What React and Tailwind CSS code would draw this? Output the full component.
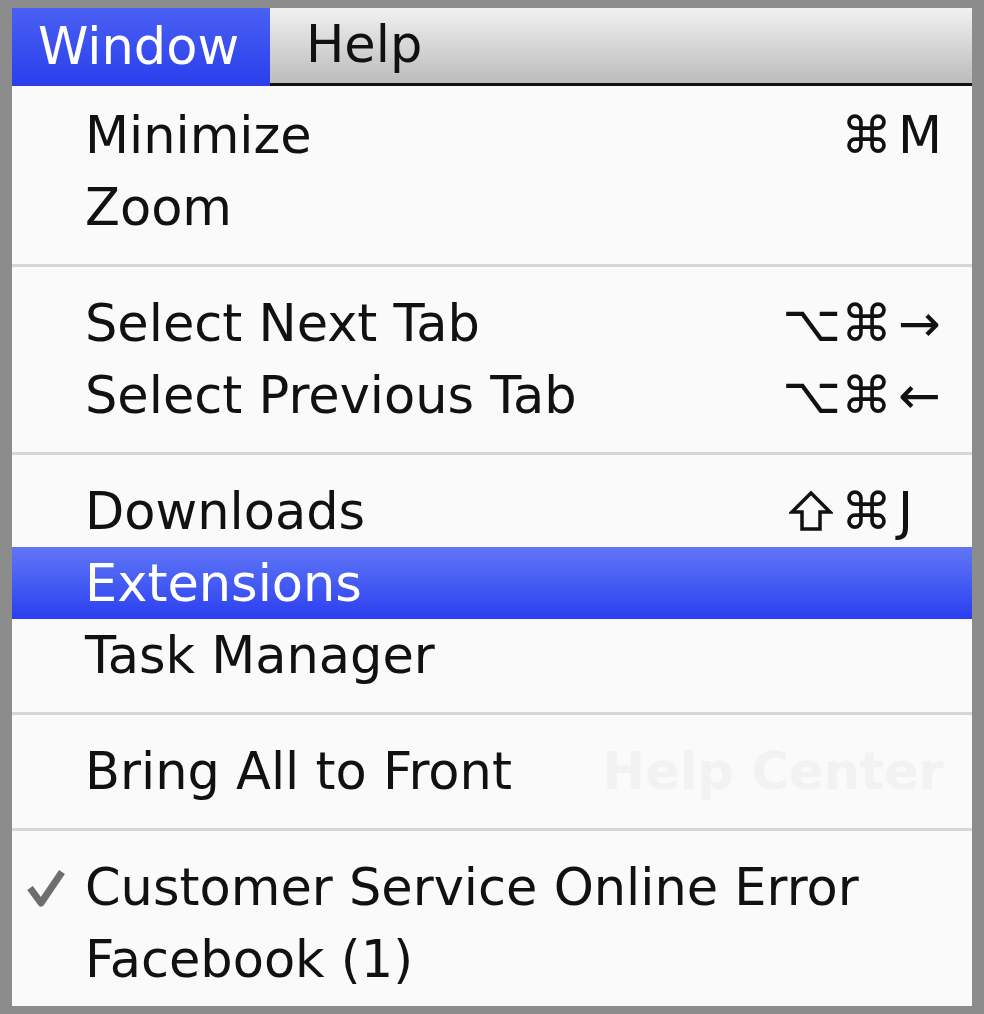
import React from 'react';

const font = { fontFamily: '"DejaVu Sans", "Liberation Sans", sans-serif' };

function ShiftIcon() {
  return (
    <svg width="44" height="42" viewBox="0 0 44 42" className="mr-[8px] inline-block">
      <path
        d="M22 3 L41 22 L31 22 L31 39 L13 39 L13 22 L3 22 Z"
        fill="none"
        stroke="#111"
        strokeWidth="3.5"
        strokeLinejoin="miter"
      />
    </svg>
  );
}

function CheckIcon() {
  return (
    <svg width="40" height="42" viewBox="0 0 40 42">
      <path
        d="M4 22 L15 37 L36 6"
        fill="none"
        stroke="#6e6e6e"
        strokeWidth="7"
        strokeLinejoin="round"
      />
    </svg>
  );
}

function Shortcut({ mods, keyChar }) {
  return (
    <div className="ml-auto flex items-center">
      <span className="flex w-[120px] items-center justify-end">{mods}</span>
      <span className="w-[52px] pl-[6px] text-left">{keyChar}</span>
    </div>
  );
}

function Item({ label, mods, keyChar, active, checked, children }) {
  return (
    <div
      className={
        'flex h-[72px] items-center pr-[28px] ' +
        (active
          ? 'bg-gradient-to-b from-[#6275f6] to-[#2b3cef] text-white'
          : 'text-[#111]')
      }
    >
      <span className="flex w-[73px] justify-start pl-[14px]">
        {checked ? <CheckIcon /> : null}
      </span>
      <span>{label}</span>
      {children}
      {keyChar && <Shortcut mods={mods} keyChar={keyChar} />}
    </div>
  );
}

function Separator() {
  return (
    <div className="flex h-[44px] items-center">
      <div className="h-[3px] w-full bg-[#d6d6d6]" />
    </div>
  );
}

export default function App() {
  return (
    <div
      className="flex h-[1014px] w-[984px] flex-col bg-[#8c8c8c] pb-[8px] pl-[12px] pr-[12px] pt-[8px]"
      style={font}
    >
      <div className="flex h-[78px] text-[51px]">
        <div className="flex w-[258px] items-center bg-gradient-to-b from-[#4a5ff3] to-[#2a3eec] pl-[26px] text-white">
          Window
        </div>
        <div className="flex flex-1 items-center border-b-[3px] border-[#111] bg-gradient-to-b from-[#f0f1f0] to-[#bcbcbc] pl-[36px] text-[#111]">
          Help
        </div>
      </div>
      <div className="flex flex-1 flex-col bg-[#fafafa] pt-[13px] text-[51px] leading-none">
        <Item label="Minimize" mods="⌘" keyChar="M" />
        <Item label="Zoom" />
        <Separator />
        <Item label="Select Next Tab" mods="⌥⌘" keyChar="→" />
        <Item label="Select Previous Tab" mods="⌥⌘" keyChar="←" />
        <Separator />
        <Item
          label="Downloads"
          mods={
            <>
              <ShiftIcon />
              ⌘
            </>
          }
          keyChar="J"
        />
        <Item label="Extensions" active />
        <Item label="Task Manager" />
        <Separator />
        <Item label="Bring All to Front">
          <span className="ml-auto font-bold text-[#f2f2f2]">Help Center</span>
        </Item>
        <Separator />
        <Item label="Customer Service Online Error" checked />
        <Item label="Facebook (1)" />
      </div>
    </div>
  );
}
